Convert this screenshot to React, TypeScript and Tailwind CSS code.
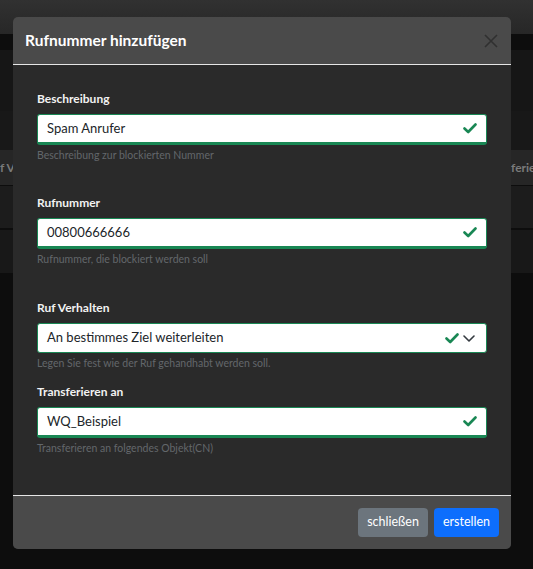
import React from 'react';

const font = { fontFamily: 'Lato, "Noto Sans", Arial, sans-serif' };

function Check() {
  return (
    <svg width="14" height="11" viewBox="0 0 14 11" fill="none">
      <path d="M1.5 5.5 L5.2 9 L12.5 1.5" stroke="#198754" strokeWidth="2.6" strokeLinecap="round" strokeLinejoin="round" />
    </svg>
  );
}

function Chevron() {
  return (
    <svg width="12" height="7" viewBox="0 0 12 7" fill="none">
      <path d="M1 1 L6 6 L11 1" stroke="#343a40" strokeWidth="1.6" strokeLinecap="round" strokeLinejoin="round" />
    </svg>
  );
}

type FieldProps = {
  label: string;
  value: string;
  help: string;
  select?: boolean;
  className?: string;
};

function Field({ label, value, help, select, className }: FieldProps) {
  return (
    <div className={className}>
      <div className="h-[18px] text-[12px] leading-[18px] font-bold text-[#f2f2f2]">{label}</div>
      <div
        className={
          select
            ? 'mt-[6px] flex h-[30px] items-center rounded-[3px] border border-[#198754] bg-white pl-[9px] pr-[11px]'
            : 'mt-[6px] flex h-[31px] items-center rounded-[3px] border border-b-[3px] border-[#198754] bg-white pl-[9px] pr-[9px]'
        }
      >
        <span className="flex-1 text-[13px] text-[#212529]">{value}</span>
        <Check />
        {select && (
          <span className="ml-[4px] flex items-center">
            <Chevron />
          </span>
        )}
      </div>
      <div className="mt-[3px] h-[14px] text-[10.5px] leading-[14px] text-[#63676b]">{help}</div>
    </div>
  );
}

export default function App() {
  return (
    <div className="relative h-[569px] w-[533px] overflow-hidden bg-[#0d0d0d]" style={font}>
      {/* page behind the dialog */}
      <div className="h-[34px] bg-gradient-to-b from-[#313131] to-[#272727]" />
      <div className="h-[16px] bg-[#0d0d0d]" />
      <div className="h-[61px] bg-[#161616]" />
      <div className="h-[39px] bg-[#181818]" />
      <div className="flex h-[35px] items-center overflow-hidden bg-[#262626] text-[12px] font-bold text-[#7a7a7a]">
        <div className="w-[511px] shrink-0 overflow-hidden whitespace-nowrap">f Verhalten</div>
        <div className="shrink-0 whitespace-nowrap">ferieren</div>
      </div>
      <div className="h-px bg-[#0d0d0d]" />
      <div className="h-[42px] bg-[#1c1c1c]" />
      <div className="h-[2px] bg-[#0d0d0d]" />
      <div className="h-[43px] bg-[#181818]" />

      {/* dialog */}
      <div className="absolute left-[13px] top-[17px] w-[498px] overflow-hidden rounded-[5px] bg-[#2a2a2a]">
        <div className="flex h-[48px] items-center justify-between border-b border-[#e6e6e6] bg-[#4a4a4a] pl-3 pr-[13px]">
          <h5 className="text-[15.5px] font-bold text-white">Rufnummer hinzufügen</h5>
          <svg width="14" height="14" viewBox="0 0 14 14" fill="none">
            <path d="M1 1 L13 13 M13 1 L1 13" stroke="#303030" strokeWidth="1.6" />
          </svg>
        </div>

        <div className="px-6 pb-[40px] pt-[25px]">
          <Field label="Beschreibung" value="Spam Anrufer" help="Beschreibung zur blockierten Nummer" />
          <Field
            className="mt-[32px]"
            label="Rufnummer"
            value="00800666666"
            help="Rufnummer, die blockiert werden soll"
          />
          <Field
            className="mt-[33px]"
            label="Ruf Verhalten"
            value="An bestimmes Ziel weiterleiten"
            help="Legen Sie fest wie der Ruf gehandhabt werden soll."
            select
          />
          <Field
            className="mt-[13px]"
            label="Transferieren an"
            value="WQ_Beispiel"
            help="Transferieren an folgendes Objekt(CN)"
          />
        </div>

        <div className="flex h-[54px] items-center justify-end gap-[6px] border-t border-[#e6e6e6] bg-[#4a4a4a] pr-3">
          <button className="h-[29px] rounded-[4px] bg-[#6c757d] px-[9px] text-[12.5px] text-white">schließen</button>
          <button className="h-[29px] rounded-[4px] bg-[#0d6efd] px-[9px] text-[12.5px] text-white">erstellen</button>
        </div>
      </div>
    </div>
  );
}
